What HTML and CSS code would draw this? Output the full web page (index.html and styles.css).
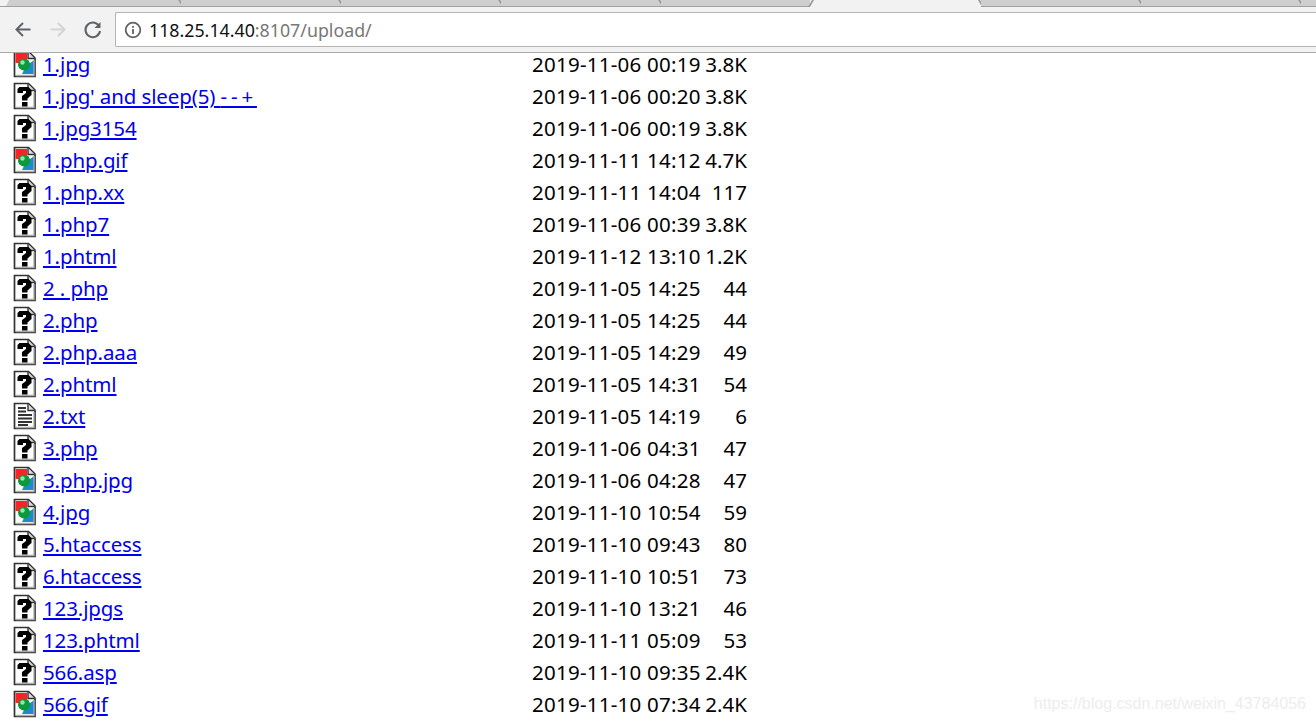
FILE: index.html
```html
<!DOCTYPE html>
<html lang="en">
<head>
<meta charset="utf-8">
<title>Index of /upload</title>
<link rel="stylesheet" href="styles.css">
</head>
<body>
<svg class="defs" width="0" height="0" aria-hidden="true">
  <symbol id="file" viewBox="0 0 25 28">
    <path d="M2.500 1.500H16.500L23 8V26.500H2.500Z" fill="#fff" stroke="#333" stroke-width="1.700"/>
    <path d="M16 2V8.500H22.500" fill="#ddd" stroke="#333" stroke-width="1.400"/>
    <path d="M22 10V25.500H4" fill="none" stroke="#aaa" stroke-width="1.300"/>
  </symbol>
  <symbol id="unknown" viewBox="0 0 25 28">
    <use href="#file"/>
    <path d="M5.500 11V7L7.500 5H16.500L19.500 8V13L15.500 16.500V18.500H10V14L14 11V9H11V11Z" fill="#000"/>
    <rect x="10" y="20" width="5.500" height="4.500" fill="#000"/>
  </symbol>
  <symbol id="image" viewBox="0 0 25 28">
    <use href="#file"/>
    <path d="M3.500 3H15V9L11 13H3.500Z" fill="#f22"/>
    <path d="M14 16L21.500 10.500V24H10Z" fill="#1e88c8"/>
    <circle cx="12" cy="14.500" r="6" fill="#0a9a3a"/>
    <circle cx="10.500" cy="12.500" r="2.200" fill="#9fe3a8"/>
  </symbol>
  <symbol id="text" viewBox="0 0 25 28">
    <use href="#file"/>
    <path d="M6 6H14M6 9.500H14M6 13H20M6 16.500H20M6 20H20M6 23H16" stroke="#333" stroke-width="1.800" fill="none"/>
  </symbol>
</svg>

<header class="chrome">
  <div class="tabstrip">
    <div class="tab t1"></div><div class="tab"></div><div class="tab"></div><div class="tab"></div>
    <div class="tab before-active"></div>
    <div class="tab active"></div>
    <div class="tab"></div><div class="tab"></div><div class="tab rest"></div>
  </div>
  <div class="toolbar">
    <svg class="nav" viewBox="0 0 20 20"><path d="M17.500 10H4M10 3.500L3.500 10L10 16.500" fill="none" stroke="#5f6368" stroke-width="2"/></svg>
    <svg class="nav" viewBox="0 0 20 20"><path d="M2.500 10H16M10 3.500L16.500 10L10 16.500" fill="none" stroke="#d4d4d4" stroke-width="2"/></svg>
    <svg class="nav" viewBox="0 0 20 20"><path d="M16 6.500A7.300 7.300 0 1 0 17 11.500" fill="none" stroke="#5f6368" stroke-width="2"/><path d="M17.500 2.500V8.500H11.500Z" fill="#5f6368"/></svg>
    <div class="omnibox">
      <svg class="info" viewBox="0 0 18 18"><circle cx="9" cy="9" r="7.300" fill="none" stroke="#5f6368" stroke-width="1.800"/><rect x="8.100" y="8" width="1.800" height="5" fill="#5f6368"/><rect x="8.100" y="5" width="1.800" height="1.800" fill="#5f6368"/></svg>
      <span class="host">118.25.14.40</span><span class="path">:8107/upload/</span>
    </div>
  </div>
</header>

<main class="page">
  <table class="listing">
    <tbody>
      <tr><td class="ic"><svg><use href="#image"/></svg></td><td class="nm"><a href="#">1.jpg</a></td><td class="dt">2019-11-06 00:19</td><td class="sz">3.8K</td></tr>
      <tr><td class="ic"><svg><use href="#unknown"/></svg></td><td class="nm"><a href="#">1.jpg' and sleep(5) <span class="dashes">--+</span></a></td><td class="dt">2019-11-06 00:20</td><td class="sz">3.8K</td></tr>
      <tr><td class="ic"><svg><use href="#unknown"/></svg></td><td class="nm"><a href="#">1.jpg3154</a></td><td class="dt">2019-11-06 00:19</td><td class="sz">3.8K</td></tr>
      <tr><td class="ic"><svg><use href="#image"/></svg></td><td class="nm"><a href="#">1.php.gif</a></td><td class="dt">2019-11-11 14:12</td><td class="sz">4.7K</td></tr>
      <tr><td class="ic"><svg><use href="#unknown"/></svg></td><td class="nm"><a href="#">1.php.xx</a></td><td class="dt">2019-11-11 14:04</td><td class="sz">117</td></tr>
      <tr><td class="ic"><svg><use href="#unknown"/></svg></td><td class="nm"><a href="#">1.php7</a></td><td class="dt">2019-11-06 00:39</td><td class="sz">3.8K</td></tr>
      <tr><td class="ic"><svg><use href="#unknown"/></svg></td><td class="nm"><a href="#">1.phtml</a></td><td class="dt">2019-11-12 13:10</td><td class="sz">1.2K</td></tr>
      <tr><td class="ic"><svg><use href="#unknown"/></svg></td><td class="nm"><a href="#">2 . php</a></td><td class="dt">2019-11-05 14:25</td><td class="sz">44</td></tr>
      <tr><td class="ic"><svg><use href="#unknown"/></svg></td><td class="nm"><a href="#">2.php</a></td><td class="dt">2019-11-05 14:25</td><td class="sz">44</td></tr>
      <tr><td class="ic"><svg><use href="#unknown"/></svg></td><td class="nm"><a href="#">2.php.aaa</a></td><td class="dt">2019-11-05 14:29</td><td class="sz">49</td></tr>
      <tr><td class="ic"><svg><use href="#unknown"/></svg></td><td class="nm"><a href="#">2.phtml</a></td><td class="dt">2019-11-05 14:31</td><td class="sz">54</td></tr>
      <tr><td class="ic"><svg><use href="#text"/></svg></td><td class="nm"><a href="#">2.txt</a></td><td class="dt">2019-11-05 14:19</td><td class="sz">6</td></tr>
      <tr><td class="ic"><svg><use href="#unknown"/></svg></td><td class="nm"><a href="#">3.php</a></td><td class="dt">2019-11-06 04:31</td><td class="sz">47</td></tr>
      <tr><td class="ic"><svg><use href="#image"/></svg></td><td class="nm"><a href="#">3.php.jpg</a></td><td class="dt">2019-11-06 04:28</td><td class="sz">47</td></tr>
      <tr><td class="ic"><svg><use href="#image"/></svg></td><td class="nm"><a href="#">4.jpg</a></td><td class="dt">2019-11-10 10:54</td><td class="sz">59</td></tr>
      <tr><td class="ic"><svg><use href="#unknown"/></svg></td><td class="nm"><a href="#">5.htaccess</a></td><td class="dt">2019-11-10 09:43</td><td class="sz">80</td></tr>
      <tr><td class="ic"><svg><use href="#unknown"/></svg></td><td class="nm"><a href="#">6.htaccess</a></td><td class="dt">2019-11-10 10:51</td><td class="sz">73</td></tr>
      <tr><td class="ic"><svg><use href="#unknown"/></svg></td><td class="nm"><a href="#">123.jpgs</a></td><td class="dt">2019-11-10 13:21</td><td class="sz">46</td></tr>
      <tr><td class="ic"><svg><use href="#unknown"/></svg></td><td class="nm"><a href="#">123.phtml</a></td><td class="dt">2019-11-11 05:09</td><td class="sz">53</td></tr>
      <tr><td class="ic"><svg><use href="#unknown"/></svg></td><td class="nm"><a href="#">566.asp</a></td><td class="dt">2019-11-10 09:35</td><td class="sz">2.4K</td></tr>
      <tr><td class="ic"><svg><use href="#image"/></svg></td><td class="nm"><a href="#">566.gif</a></td><td class="dt">2019-11-10 07:34</td><td class="sz">2.4K</td></tr>
    </tbody>
  </table>
  <div class="watermark">https://blog.csdn.net/weixin_43784056</div>
</main>
</body>
</html>
```
FILE: styles.css
```css
* { box-sizing: border-box; }
html, body { margin: 0; height: 100%; overflow: hidden; background: #fff; }
body { display: flex; flex-direction: column; font-family: "Noto Sans", "Open Sans", sans-serif; }
.defs { position: absolute; }

.chrome { flex: none; height: 53px; background: #f2f2f2; border-bottom: 1px solid #a9a9a9; }
.tabstrip { display: flex; height: 7px; padding-left: 6px; border-bottom: 1px solid #a0a0a0; }
.tab { position: relative; flex: none; width: 160px; height: 6px; background: #cecece; }
.tab::after { content: ""; position: absolute; top: 0; bottom: 0; right: 0; width: 1.500px; background: #9a9a9a; transform: skewX(30deg); }
.tab.t1 { width: 175px; clip-path: polygon(3px 0, 100% 0, 100% 100%, 0 100%); }
.tab.before-active { width: 149px; }
.tab.before-active::after { display: none; }
.tab.active { width: 171px; height: 7px; background: #f2f2f2; }
.tab.active::before { content: ""; position: absolute; top: 0; bottom: 0; left: 0; width: 1.500px; background: #9a9a9a; transform: skewX(-30deg); }
.tab.rest { flex: 1; }
.tab.rest::after { display: none; }

.toolbar { display: flex; height: 45px; padding: 5px 0 0 13px; }
.nav { width: 20px; height: 35px; margin-right: 15px; flex: none; }
.omnibox { display: flex; align-items: center; flex: 1; height: 35px; margin-left: -3px; background: #fff; border: 1px solid #b4b4b4; border-right: 0; border-radius: 2px 0 0 2px; padding-left: 8px; font-size: 17.800px; }
.info { width: 18px; height: 18px; margin-right: 7px; flex: none; }
.host { color: #111; }
.path { color: #777; }

.page { position: relative; flex: 1; overflow: hidden; }
.listing { border-collapse: collapse; table-layout: fixed; width: 747px; margin-top: -5px; font-size: 20.500px; line-height: 22px; color: #000; }
.listing tr { height: 32px; }
.listing td { padding: 0; white-space: nowrap; vertical-align: middle; }
.ic { width: 43px; padding-left: 12px !important; }
.ic svg { display: block; width: 25px; height: 28px; }
.nm { width: 489px; letter-spacing: -0.120px; }
.nm a { color: #0000ee; text-decoration: underline; }
.dashes { letter-spacing: 3.800px; }
.dt { width: 173px; letter-spacing: 0.250px; }
.sz { text-align: right; }

.watermark { position: absolute; right: 10px; bottom: 8px; font-family: "Liberation Sans", sans-serif; font-size: 16px; line-height: 18px; color: #ededed; }
```
